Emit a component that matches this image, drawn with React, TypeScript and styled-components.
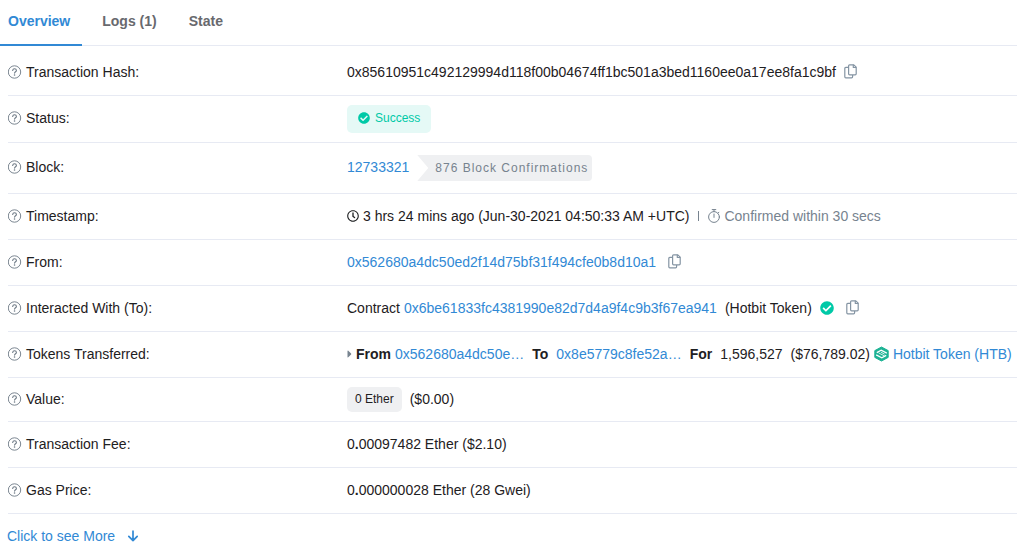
import React from "react";
import styled, { createGlobalStyle } from "styled-components";
import { FaCheckCircle, FaRegClock } from "react-icons/fa";

const GlobalStyle = createGlobalStyle`
  * { box-sizing: border-box; }
  body {
    margin: 0;
    background: #ffffff;
    color: #1e2022;
    font-family: "Liberation Sans", Arial, sans-serif;
    font-size: 14px;
    line-height: 20px;
    overflow: hidden;
  }
`;

const Tabs = styled.nav`
  display: flex;
  gap: 8px;
  height: 46px;
  border-bottom: 1px solid #e7eaf3;
`;

const Tab = styled.button<{ $active?: boolean }>`
  height: 46px;
  padding: 0 12px 2px;
  border: 0;
  border-bottom: 2px solid ${(p) => (p.$active ? "#3189d5" : "transparent")};
  background: none;
  color: ${(p) => (p.$active ? "#3189d5" : "#68696e")};
  font: inherit;
  font-weight: 700;
  cursor: pointer;

  &:first-child {
    padding-left: 8px;
  }
`;

const Details = styled.dl`
  margin: 0;
  padding: 4px 0 0 8px;
`;

const Row = styled.div<{ $height?: number }>`
  display: grid;
  grid-template-columns: 1fr 2fr;
  column-gap: 4px;
  align-items: center;
  min-height: ${(p) => p.$height ?? 46}px;
  padding-bottom: 2px;
  border-bottom: 1px solid #e7eaf3;
  white-space: nowrap;
`;

const Term = styled.dt`
  display: flex;
  align-items: center;
  gap: 4px;
`;

const Value = styled.dd<{ $gap?: number }>`
  display: flex;
  align-items: center;
  gap: ${(p) => p.$gap ?? 8}px;
  min-width: 0;
  margin: 0;
`;

const Group = styled.span<{ $gap?: number; $muted?: boolean }>`
  display: inline-flex;
  align-items: center;
  gap: ${(p) => p.$gap ?? 4}px;
  color: ${(p) => (p.$muted ? "#77838f" : "inherit")};
`;

const Divider = styled.span`
  width: 1px;
  height: 10px;
  margin: 0 1px;
  background: #77838f;
`;

const Link = styled.a`
  color: #3189d5;
  text-decoration: none;
`;

const MoreLink = styled(Link)`
  display: inline-flex;
  align-items: center;
  gap: 12px;
  margin: 12px 7px;
`;

const IconButton = styled.button`
  display: inline-flex;
  padding: 0;
  border: 0;
  background: none;
  color: #8494a3;
  cursor: pointer;
`;

const Badge = styled.span`
  display: inline-flex;
  align-items: center;
  margin-top: 2px;
  font-size: 12px;
`;

const StatusBadge = styled(Badge)`
  gap: 5px;
  height: 28px;
  padding: 0 11px 2px;
  border-radius: 5px;
  background: #e5f9f6;
  color: #00c9a7;
`;

const AmountBadge = styled(Badge)`
  height: 25px;
  padding: 0 8px 1px;
  border-radius: 5px;
  background: #eff0f2;
`;

const Confirmations = styled(Badge)`
  height: 26px;
  padding: 0 4px 0 18px;
  border-radius: 0 4px 4px 0;
  background: #eff0f2;
  clip-path: polygon(0 0, 100% 0, 100% 100%, 0 100%, 11px 50%);
  color: #77838f;
  letter-spacing: 1px;
`;

const HelpIcon = () => (
  <svg width="14" height="14" viewBox="0 0 14 14" fill="none" stroke="#6c7884" aria-hidden="true">
    <circle cx="6.5" cy="7" r="6.2" strokeWidth="0.9" />
    <path d="M4.7 5.5C4.8 4.4 5.5 3.8 6.5 3.8c1.1 0 1.9.7 1.9 1.6 0 1.3-1.8 1.4-1.8 2.7" strokeWidth="1.1" strokeLinecap="round" />
    <circle cx="6.55" cy="10" r=".8" fill="#6c7884" stroke="none" />
  </svg>
);

const StopwatchIcon = () => (
  <svg width="12" height="14" viewBox="0 0 12 14" fill="none" stroke="#77838f" strokeWidth="1" strokeLinecap="round" aria-hidden="true">
    <circle cx="6" cy="8" r="5.4" />
    <path d="M4.2.6h3.6M6 .6v2M10 4.1l.9-.9M6 5v3.4" />
  </svg>
);

const CaretIcon = () => (
  <svg width="5" height="8" viewBox="0 0 5 8" fill="#77838f" aria-hidden="true">
    <path d="M.5 1.1c0-.5.5-.7.8-.4L4.1 3.6c.2.2.2.6 0 .8L1.3 7.3c-.3.3-.8.1-.8-.4Z" />
  </svg>
);

const ArrowDownIcon = () => (
  <svg width="12" height="12" viewBox="0 0 12 12" fill="none" stroke="currentColor" strokeWidth="1.7" strokeLinecap="round" strokeLinejoin="round" aria-hidden="true">
    <path d="M6 1.2v9.4M1.8 6.4 6 10.7l4.2-4.3" />
  </svg>
);

const HotbitIcon = () => (
  <svg width="15" height="16" viewBox="0 0 15 16" fill="none" aria-hidden="true">
    <path d="M7.5 1 14.2 4.6v6.8L7.5 15 .8 11.4V4.6Z" fill="#1db394" stroke="#1db394" strokeLinejoin="round" />
    <path d="M12.8 7.1 7.2 4.2 2.8 6.6M2.2 8.9l5.6 2.9 4.4-2.4" stroke="#ffffff" strokeWidth="1.2" />
    <path d="m4.6 6.9 5.8 3M7 6.2l3.6 1.9" stroke="#ffffff" strokeWidth="0.8" />
  </svg>
);

const CopyIcon = () => (
  <svg width="13" height="15" viewBox="0 0 13 15" fill="none" stroke="currentColor" strokeWidth="1.2" strokeLinejoin="round" aria-hidden="true">
    <path d="M5.6.8h4.2l2.4 2.4v6.6c0 .6-.4 1-1 1H5.6c-.6 0-1-.4-1-1v-8c0-.6.4-1 1-1Z" />
    <path d="M9.3.8v2.7h2.9" />
    <path d="M4.4 3.4H1.8c-.6 0-1 .4-1 1v8.4c0 .6.4 1 1 1h5.8c.6 0 1-.4 1-1V11" />
  </svg>
);

const CopyButton = () => (
  <IconButton type="button" aria-label="Copy">
    <CopyIcon />
  </IconButton>
);

interface DetailProps {
  label: string;
  height?: number;
  gap?: number;
  children: React.ReactNode;
}

const Detail = ({ label, height, gap, children }: DetailProps) => (
  <Row $height={height}>
    <Term>
      <HelpIcon />
      {label}:
    </Term>
    <Value $gap={gap}>{children}</Value>
  </Row>
);

export default function App() {
  return (
    <main>
      <GlobalStyle />
      <Tabs>
        <Tab type="button" $active>Overview</Tab>
        <Tab type="button">Logs (1)</Tab>
        <Tab type="button">State</Tab>
      </Tabs>
      <Details>
        <Detail label="Transaction Hash">
          <span>0x85610951c492129994d118f00b04674ff1bc501a3bed1160ee0a17ee8fa1c9bf</span>
          <CopyButton />
        </Detail>
        <Detail label="Status" height={47}>
          <StatusBadge>
            <FaCheckCircle size={12} />
            Success
          </StatusBadge>
        </Detail>
        <Detail label="Block" height={51}>
          <Link href="#block">12733321</Link>
          <Confirmations>876 Block Confirmations</Confirmations>
        </Detail>
        <Detail label="Timestamp">
          <Group>
            <FaRegClock size={12} />
            3 hrs 24 mins ago (Jun-30-2021 04:50:33 AM +UTC)
          </Group>
          <Group $gap={8} $muted>
            <Divider />
            <Group>
              <StopwatchIcon />
              Confirmed within 30 secs
            </Group>
          </Group>
        </Detail>
        <Detail label="From" gap={12}>
          <Link href="#from">0x562680a4dc50ed2f14d75bf31f494cfe0b8d10a1</Link>
          <CopyButton />
        </Detail>
        <Detail label="Interacted With (To)">
          <Group>
            Contract
            <Link href="#contract">0x6be61833fc4381990e82d7d4a9f4c9b3f67ea941</Link>
          </Group>
          <span>(Hotbit Token)</span>
          <Group $gap={12}>
            <FaCheckCircle size={14} color="#00c9a7" />
            <CopyButton />
          </Group>
        </Detail>
        <Detail label="Tokens Transferred">
          <Group>
            <CaretIcon />
            <b>From</b>
            <Link href="#sender">0x562680a4dc50e…</Link>
          </Group>
          <Group $gap={8}>
            <b>To</b>
            <Link href="#recipient">0x8e5779c8fe52a…</Link>
          </Group>
          <Group $gap={8}>
            <b>For</b>
            <span>1,596,527</span>
            <Group>
              ($76,789.02)
              <HotbitIcon />
              <Link href="#token">Hotbit Token (HTB)</Link>
            </Group>
          </Group>
        </Detail>
        <Detail label="Value" height={44}>
          <AmountBadge>0 Ether</AmountBadge>
          <span>($0.00)</span>
        </Detail>
        <Detail label="Transaction Fee">
          <span>0<b>.</b>00097482 Ether ($2.10)</span>
        </Detail>
        <Detail label="Gas Price">
          <span>0<b>.</b>000000028 Ether (28 Gwei)</span>
        </Detail>
      </Details>
      <MoreLink href="#more">
        Click to see More
        <ArrowDownIcon />
      </MoreLink>
    </main>
  );
}
